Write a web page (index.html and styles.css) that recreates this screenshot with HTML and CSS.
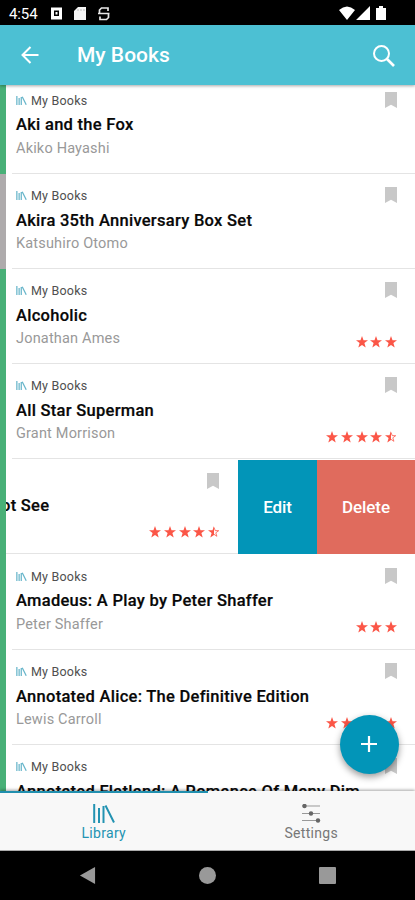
FILE: index.html
```html
<!DOCTYPE html>
<html lang="en">
<head>
<meta charset="utf-8">
<title>My Books</title>
<link rel="stylesheet" href="styles.css">
</head>
<body>
<svg class="defs" aria-hidden="true">
  <symbol id="books" viewBox="0 0 22 19"><path d="M1.2 0v19M6 4v15M10.5 2v17M12.5 1.5L21 18.5" fill="none" stroke="currentColor"/></symbol>
  <symbol id="mark" viewBox="0 0 12 16"><path d="M0 0h12v16L6 12.8 0 16z" fill="currentColor"/></symbol>
  <symbol id="star" viewBox="0 0 12 12"><path d="M6 0l1.5 4.2 4.5.1-3.6 2.8L9.700 11.500 6 8.900 2.300 11.500 3.600 7.100 0 4.300l4.500-.1z" fill="currentColor"/></symbol>
  <symbol id="half" viewBox="0 0 12 12"><path d="M6 0v8.900L2.300 11.500 3.600 7.100 0 4.300l4.500-.1z" fill="currentColor"/><path d="M6 1.300l1.200 3.300 3.500.1-2.900 2.100 1.100 3.500L6 8.300" fill="none" stroke="currentColor" stroke-width=".8"/></symbol>
</svg>
<div class="phone">
  <div class="status">
    <span class="clock">4:54</span>
    <svg class="status-left" viewBox="0 0 60 15"><path d="M0 1.500h11v12H0zM3 4.500v5.500h5V4.500zM4.500 6h2v2.500h-2z" fill="#fff" fill-rule="evenodd"/><path d="M27 1h8v13H23V5z" fill="#f5f5f5"/><path d="M27 3v2M30 3v2M33 3v2" stroke="#bbb"/><path d="M57 5V2h-6.500L48.500 4v3.500h9v4L55.500 13.500h-6.500v-3M47 7.500h11.500" fill="none" stroke="#e8e8e8" stroke-width="1.700"/></svg>
    <svg class="status-right" viewBox="0 0 48 15"><path d="M0 4Q8-3 16 4L8 14z M31 0v14H17z M37 2h3V0h4v2h3v12H37z" fill="#fff"/></svg>
  </div>
  <header class="header">
    <svg class="back" viewBox="0 0 18 18"><path d="M17.500 9H2M9.500 1L1.500 9l8 8" fill="none" stroke="#fff" stroke-width="2"/></svg>
    <h1>My Books</h1>
    <svg class="search" viewBox="0 0 22 22"><circle cx="8.500" cy="8.500" r="7.500" fill="none" stroke="#fff" stroke-width="2"/><path d="M13.500 13.500L21 21" stroke="#fff" stroke-width="2.600"/></svg>
  </header>
  <main class="list">
    <article class="row">
      <div class="body"><p class="shelf"><svg><use href="#books"/></svg>My Books</p><h2>Aki and the Fox</h2><p class="author">Akiko Hayashi</p><svg class="mark"><use href="#mark"/></svg></div>
    </article>
    <article class="row unread">
      <div class="body"><p class="shelf"><svg><use href="#books"/></svg>My Books</p><h2>Akira 35th Anniversary Box Set</h2><p class="author">Katsuhiro Otomo</p><svg class="mark"><use href="#mark"/></svg></div>
    </article>
    <article class="row">
      <div class="body"><p class="shelf"><svg><use href="#books"/></svg>My Books</p><h2>Alcoholic</h2><p class="author">Jonathan Ames</p><svg class="mark"><use href="#mark"/></svg>
      <div class="stars"><svg><use href="#star"/></svg><svg><use href="#star"/></svg><svg><use href="#star"/></svg></div></div>
    </article>
    <article class="row">
      <div class="body"><p class="shelf"><svg><use href="#books"/></svg>My Books</p><h2>All Star Superman</h2><p class="author">Grant Morrison</p><svg class="mark"><use href="#mark"/></svg>
      <div class="stars"><svg><use href="#star"/></svg><svg><use href="#star"/></svg><svg><use href="#star"/></svg><svg><use href="#star"/></svg><svg><use href="#half"/></svg></div></div>
    </article>
    <article class="row swiped">
      <div class="body"><h2>ot See</h2><svg class="mark"><use href="#mark"/></svg>
      <div class="stars"><svg><use href="#star"/></svg><svg><use href="#star"/></svg><svg><use href="#star"/></svg><svg><use href="#star"/></svg><svg><use href="#half"/></svg></div></div>
      <button class="edit">Edit</button><button class="delete">Delete</button>
    </article>
    <article class="row">
      <div class="body"><p class="shelf"><svg><use href="#books"/></svg>My Books</p><h2>Amadeus: A Play by Peter Shaffer</h2><p class="author">Peter Shaffer</p><svg class="mark"><use href="#mark"/></svg>
      <div class="stars"><svg><use href="#star"/></svg><svg><use href="#star"/></svg><svg><use href="#star"/></svg></div></div>
    </article>
    <article class="row">
      <div class="body"><p class="shelf"><svg><use href="#books"/></svg>My Books</p><h2>Annotated Alice: The Definitive Edition</h2><p class="author">Lewis Carroll</p><svg class="mark"><use href="#mark"/></svg>
      <div class="stars"><svg><use href="#star"/></svg><svg><use href="#star"/></svg><svg><use href="#star"/></svg><svg><use href="#star"/></svg><svg><use href="#star"/></svg></div></div>
    </article>
    <article class="row">
      <div class="body"><p class="shelf"><svg><use href="#books"/></svg>My Books</p><h2>Annotated Flatland: A Romance Of Many Dim</h2><svg class="mark"><use href="#mark"/></svg></div>
    </article>
  </main>
  <nav class="tabs">
    <div class="tab active"><svg><use href="#books"/></svg><span>Library</span></div>
    <div class="tab"><svg viewBox="0 0 19 19"><path d="M0 2h18M0 9.500h18M0 16.500h18" stroke="#999"/><g fill="#666"><circle cx="2.500" cy="2" r="2.200"/><circle cx="9" cy="9.500" r="2.200"/><circle cx="16" cy="16.500" r="2.200"/></g></svg><span>Settings</span></div>
  </nav>
  <button class="fab" aria-label="Add"><svg viewBox="0 0 16 16"><path d="M8 0v16M0 8h16" stroke="#fff" stroke-width="2.200"/></svg></button>
  <div class="system">
    <svg viewBox="0 0 16 18"><path d="M16 0v18L0 9z"/></svg>
    <svg viewBox="0 0 16 16"><circle cx="8" cy="8" r="8"/></svg>
    <svg viewBox="0 0 17 17"><rect width="17" height="17" rx="1"/></svg>
  </div>
</div>
</body>
</html>
```
FILE: styles.css
```css
* { box-sizing: border-box; margin: 0; padding: 0; }
body { font-family: Roboto, sans-serif; background: #fff; }
svg { display: block; flex: none; }
button { border: 0; font: inherit; color: #fff; }
.defs { position: absolute; width: 0; height: 0; }
.phone { position: relative; width: 415px; height: 900px; display: flex; flex-direction: column; overflow: hidden; }

.status { height: 25px; flex: none; background: #000; color: #fff; display: flex; align-items: center; padding: 2px 28px 0 9px; }
.clock { font-size: 15px; width: 42px; letter-spacing: -.1px; }
.status-left { width: 60px; height: 15px; }
.status-right { width: 48px; height: 15px; margin-left: auto; }

.header { height: 60px; flex: none; background: #4cc0d3; color: #fff; display: flex; align-items: center; padding: 0 20px 0 21px; position: relative; z-index: 2; box-shadow: 0 1px 3px rgba(0,0,0,.35); }
.header h1 { font-size: 21px; font-weight: 500; margin-left: 38px; }
.back { width: 18px; height: 18px; }
.search { width: 22px; height: 22px; margin: 2px 0 0 auto; }

.list { height: 706px; flex: none; overflow: hidden; padding-top: .2px; }
.row { height: 95.200px; display: flex; border-left: 6px solid #48b077; overflow: hidden; }
.row:first-child { margin-top: -6.800px; }
.row.unread { border-left-color: #aeabac; }
.body { flex: 1; min-width: 0; display: grid; grid-template-columns: 1fr auto; grid-template-rows: 22px 25px 22px; margin-left: 6px; padding: 12px 18px 0 4px; align-items: center; border-bottom: 1px solid #e4e4e4; white-space: nowrap; }
.shelf { grid-area: 1 / 1; display: flex; align-items: center; gap: 4px; margin-top: -2px; font-size: 12.500px; color: #505050; letter-spacing: .2px; }
.shelf svg { width: 11px; height: 9px; color: #67b5ca; stroke-width: 2.600px; }
.body h2 { grid-area: 2 / 1 / 3 / 3; font-size: 16.500px; font-weight: 500; color: #080808; letter-spacing: .28px; -webkit-text-stroke: .2px #080808; }
.author { grid-area: 3 / 1; font-size: 14.500px; color: #999; letter-spacing: .18px; }
.mark { grid-area: 1 / 2; justify-self: end; width: 12px; height: 16px; margin-top: -3px; color: #c8c8c8; }
.stars { grid-area: 3 / 2; display: flex; gap: 2.700px; margin-top: 6px; }
.stars svg { width: 12px; height: 12px; color: #fb5647; }

.swiped .body { margin-left: 0; padding-left: 0; overflow: hidden; }
.swiped h2 { margin-left: -5px; }
.swiped .mark { margin-right: 1px; }
.edit, .delete { font-size: 17px; font-weight: 500; letter-spacing: -.1px; height: 94.500px; margin-top: .5px; }
.edit { width: 79px; background: #0295b8; }
.delete { width: 98px; background: #e06b5d; }

.tabs { position: relative; z-index: 2; height: 59.500px; flex: none; background: #f8f8f8; display: flex; border-bottom: 1px solid #aaa; box-shadow: 0 -1px 3px rgba(0,0,0,.35); }
.tab { flex: 1; display: flex; flex-direction: column; align-items: center; padding-top: 11px; border-top: 2px solid transparent; color: #777; font-size: 14px; letter-spacing: .3px; }
.tab.active { color: #2393b2; border-top-color: #218fae; }
.tab svg { width: 19px; height: 19px; margin-bottom: 2px; }
.tab.active svg { width: 22px; stroke-width: 2px; }

.fab { position: absolute; z-index: 3; left: 339.500px; top: 714.500px; width: 59px; height: 59px; border-radius: 50%; background: #0295b8; display: grid; place-items: center; box-shadow: 0 3px 7px rgba(0,0,0,.4); }
.fab svg { width: 16px; height: 16px; }

.system { flex: 1; background: #000; display: flex; justify-content: space-between; align-items: center; padding: 0 79px; }
.system svg { width: 17px; height: 17px; fill: #999; }
```
